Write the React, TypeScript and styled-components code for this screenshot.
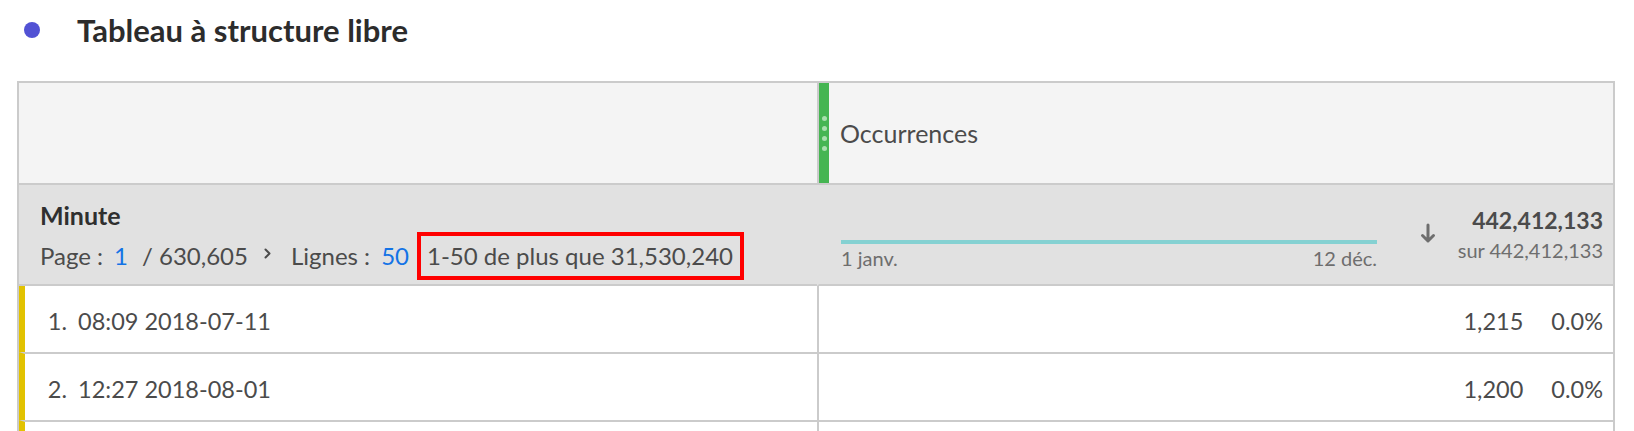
import React from "react";
import styled, { createGlobalStyle } from "styled-components";

const GlobalStyle = createGlobalStyle`
  html, body { margin: 0; padding: 0; background: #ffffff; }
  body {
    font-family: Lato, "Open Sans", sans-serif;
    color: #4b4b4b;
    overflow: hidden;
  }
`;

const Page = styled.div`
  padding: 0 19px 0 17px;
`;

const TitleRow = styled.div`
  display: flex;
  align-items: center;
  height: 60px;
  padding-left: 7px;
  margin-bottom: 21px;
`;

const Dot = styled.span`
  flex: none;
  width: 16px;
  height: 16px;
  border-radius: 50%;
  background: #5252d4;
  margin-right: 37px;
`;

const Title = styled.h1`
  margin: 0;
  font-size: 31px;
  font-weight: 700;
  line-height: 1;
  color: #2c2c2c;
`;

const Table = styled.div`
  display: grid;
  grid-template-columns: 798px 1fr;
  border: 2px solid #cbcbcb;
`;

const HeaderCell = styled.div<{ $divider?: boolean }>`
  height: 100px;
  background: #f4f4f4;
  border-bottom: 2px solid #cbcbcb;
  border-left: ${(p) => (p.$divider ? "2px solid #cbcbcb" : "none")};
  display: flex;
  align-items: center;
`;

const Grip = styled.div`
  align-self: stretch;
  width: 10px;
  background: #45b552;
  display: flex;
  flex-direction: column;
  align-items: center;
  justify-content: center;
  gap: 5px;
  margin-right: 11px;
`;

const GripDot = styled.span`
  width: 5px;
  height: 5px;
  border-radius: 50%;
  background: #a9dfae;
`;

const MetricName = styled.span`
  font-size: 25px;
  line-height: 30px;
  color: #4b4b4b;
`;

const SummaryCell = styled.div<{ $right?: boolean }>`
  height: 101px;
  box-sizing: border-box;
  background: #e1e1e1;
  border-bottom: 2px solid #cbcbcb;
  border-left: ${(p) => (p.$right ? "2px solid #e1e1e1" : "none")};
`;

const SummaryLeft = styled(SummaryCell)`
  padding: 15px 0 0 21px;
  display: flex;
  flex-direction: column;
`;

const DimName = styled.div`
  font-size: 25px;
  font-weight: 700;
  line-height: 30px;
  color: #2f2f2f;
`;

const Pager = styled.div`
  display: flex;
  align-items: center;
  height: 48px;
  margin-top: 2px;
  font-size: 24px;
  line-height: 40px;
  white-space: nowrap;
`;

const PagerText = styled.span<{ $gap?: number }>`
  margin-right: ${(p) => p.$gap ?? 0}px;
`;

const PagerLink = styled.span<{ $gap?: number }>`
  color: #1473e6;
  margin-right: ${(p) => p.$gap ?? 0}px;
`;

const Chevron = styled.svg`
  flex: none;
  width: 7px;
  height: 11px;
  margin: 0 20px 6px 16px;
`;

const Highlight = styled.span`
  border: 4px solid #ff0000;
  padding: 0 7px 0 6px;
  height: 40px;
  line-height: 40px;
`;

const SummaryRight = styled(SummaryCell)`
  display: flex;
  align-items: flex-start;
  padding: 0 10px 0 22px;
`;

const Trend = styled.div`
  flex: none;
  width: 536px;
  padding-top: 55px;
`;

const TrendLine = styled.div`
  height: 4px;
  background: #85d1d2;
`;

const TrendLabels = styled.div`
  display: flex;
  justify-content: space-between;
  margin-top: 2px;
  font-size: 20px;
  line-height: 24px;
  color: #6e6e6e;
`;

const SortIcon = styled.svg`
  flex: none;
  width: 18px;
  height: 21px;
  margin: 38px 0 0 42px;
`;

const Totals = styled.div`
  margin-left: auto;
  padding-top: 22px;
  text-align: right;
`;

const TotalValue = styled.div`
  font-size: 23px;
  font-weight: 700;
  line-height: 26px;
  color: #4b4b4b;
`;

const TotalOf = styled.div`
  font-size: 20px;
  line-height: 26px;
  margin-top: 4px;
  color: #6e6e6e;
`;

const RowCell = styled.div<{ $first?: boolean }>`
  height: 66px;
  background: #ffffff;
  border-top: ${(p) => (p.$first ? "none" : "2px solid #cbcbcb")};
  display: flex;
  align-items: center;
  font-size: 23.5px;
  line-height: 30px;
  color: #4b4b4b;
`;

const RowLeft = styled(RowCell)`
  border-left: 6px solid #e2c200;
`;

const RowIndex = styled.span`
  width: 42px;
  text-align: right;
  margin-right: 11px;
  padding-top: 3px;
`;

const RowLabel = styled.span`
  padding-top: 3px;
`;

const RowRight = styled(RowCell)`
  border-left: 2px solid #cbcbcb;
  justify-content: flex-end;
  padding-right: 10px;
`;

const RowValue = styled.span`
  padding-top: 3px;
`;

const RowPercent = styled.span`
  margin-left: 28px;
  padding-top: 3px;
`;

const rows = [
  { idx: "1.", label: "08:09 2018-07-11", value: "1,215", pct: "0.0%" },
  { idx: "2.", label: "12:27 2018-08-01", value: "1,200", pct: "0.0%" },
];

export default function App() {
  return (
    <>
      <GlobalStyle />
      <Page>
        <TitleRow>
          <Dot />
          <Title>Tableau à structure libre</Title>
        </TitleRow>
        <Table>
          <HeaderCell />
          <HeaderCell $divider>
            <Grip>
              <GripDot />
              <GripDot />
              <GripDot />
              <GripDot />
            </Grip>
            <MetricName>Occurrences</MetricName>
          </HeaderCell>

          <SummaryLeft>
            <DimName>Minute</DimName>
            <Pager>
              <PagerText $gap={11}>Page :</PagerText>
              <PagerLink $gap={14}>1</PagerLink>
              <PagerText>/ 630,605</PagerText>
              <Chevron viewBox="0 0 7 11">
                <path d="M1.5 1.5 L5.5 5.5 L1.5 9.5" fill="none" stroke="#4b4b4b" strokeWidth="2" strokeLinecap="round" strokeLinejoin="round" />
              </Chevron>
              <PagerText $gap={11}>Lignes :</PagerText>
              <PagerLink $gap={8}>50</PagerLink>
              <Highlight>1-50 de plus que 31,530,240</Highlight>
            </Pager>
          </SummaryLeft>
          <SummaryRight $right>
            <Trend>
              <TrendLine />
              <TrendLabels>
                <span>1 janv.</span>
                <span>12 déc.</span>
              </TrendLabels>
            </Trend>
            <SortIcon viewBox="0 0 18 21">
              <path d="M9 2 V18 M3.5 12.5 L9 18 L14.5 12.5" fill="none" stroke="#6e6e6e" strokeWidth="3" strokeLinecap="round" strokeLinejoin="round" />
            </SortIcon>
            <Totals>
              <TotalValue>442,412,133</TotalValue>
              <TotalOf>sur 442,412,133</TotalOf>
            </Totals>
          </SummaryRight>

          {rows.map((r, i) => (
            <React.Fragment key={r.idx}>
              <RowLeft $first={i === 0}>
                <RowIndex>{r.idx}</RowIndex>
                <RowLabel>{r.label}</RowLabel>
              </RowLeft>
              <RowRight $first={i === 0}>
                <RowValue>{r.value}</RowValue>
                <RowPercent>{r.pct}</RowPercent>
              </RowRight>
            </React.Fragment>
          ))}
          <RowLeft />
          <RowRight />
        </Table>
      </Page>
    </>
  );
}
